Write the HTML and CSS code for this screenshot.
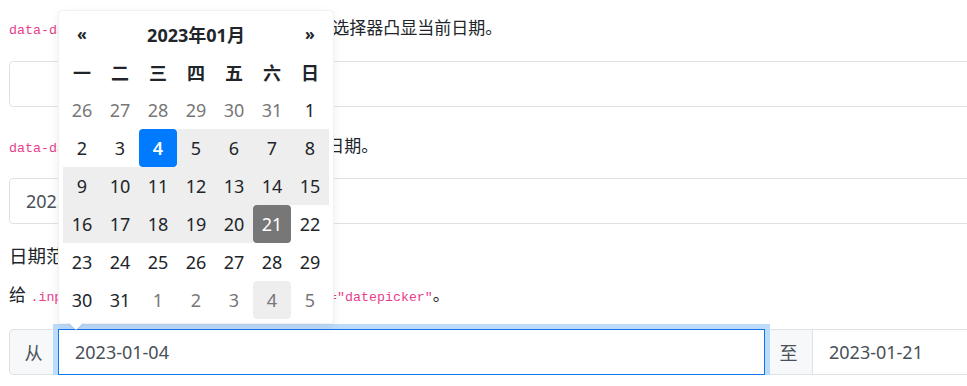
FILE: index.html
```html
<!DOCTYPE html>
<html lang="zh-CN">
<head>
  <meta charset="UTF-8">
  <meta name="viewport" content="width=device-width, initial-scale=1.0">
  <title>日期选择器</title>
  <link rel="stylesheet" href="styles.css">
</head>
<body>
  <div class="page">
    <p class="line"><code>data-date-today-highlight="true"</code>可让日期选择器凸显当前日期。</p>
    <input class="field gap-a" type="text">

    <p class="line gap-b"><code>data-date-multidate="true"</code>&nbsp;&nbsp;可以选择多个日期。</p>
    <input class="field gap-c" type="text" value="2023-01-04,2023-01-21">

    <h5 class="section-title">日期范围</h5>
    <p class="line gap-d">给 <code>.input-daterange</code> 容器添加&thinsp;<code>data-provide="datepicker"</code>。</p>

    <div class="daterange">
      <span class="addon addon-first">从</span>
      <input class="field is-focus" type="text" value="2023-01-04">
      <span class="addon addon-mid">至</span>
      <input class="field field-last" type="text" value="2023-01-21">
    </div>
  </div>

  <div class="datepicker">
    <div class="dp-grid">
      <span class="dp-nav">&laquo;</span>
      <span class="dp-switch">2023年01月</span>
      <span class="dp-nav">&raquo;</span>

      <span class="dow">一</span><span class="dow">二</span><span class="dow">三</span><span class="dow">四</span><span class="dow">五</span><span class="dow">六</span><span class="dow">日</span>

      <span class="day old">26</span><span class="day old">27</span><span class="day old">28</span><span class="day old">29</span><span class="day old">30</span><span class="day old">31</span><span class="day">1</span>

      <span class="day">2</span><span class="day">3</span><span class="day active">4</span><span class="day in-range">5</span><span class="day in-range">6</span><span class="day in-range">7</span><span class="day in-range">8</span>

      <span class="day in-range">9</span><span class="day in-range">10</span><span class="day in-range">11</span><span class="day in-range">12</span><span class="day in-range">13</span><span class="day in-range">14</span><span class="day in-range">15</span>

      <span class="day in-range">16</span><span class="day in-range">17</span><span class="day in-range">18</span><span class="day in-range">19</span><span class="day in-range">20</span><span class="day range-end">21</span><span class="day">22</span>

      <span class="day">23</span><span class="day">24</span><span class="day">25</span><span class="day">26</span><span class="day">27</span><span class="day">28</span><span class="day">29</span>

      <span class="day">30</span><span class="day">31</span><span class="day new">1</span><span class="day new">2</span><span class="day new">3</span><span class="day new hover">4</span><span class="day new">5</span>
    </div>
  </div>
</body>
</html>
```

FILE: styles.css
```css
body {
  margin: 0;
  overflow: hidden;
  font-family: "Noto Sans", "Noto Sans CJK SC", sans-serif;
  font-size: 17px;
  color: #212529;
  background: #fff;
}
.page {
  width: 1500px;
  padding: 16px 0 0 9px;
}
.line {
  margin: 0;
  line-height: 24px;
}
code {
  font-family: "Liberation Mono", monospace;
  font-size: 13.3px;
  line-height: 1;
  color: #e83e8c;
}
.field {
  display: block;
  width: 100%;
  height: 46px;
  box-sizing: border-box;
  border: 1px solid #dee2e6;
  border-radius: 4px;
  padding: 0 16px;
  font-family: "Noto Sans", "Noto Sans CJK SC", sans-serif;
  font-size: 18px;
  color: #495057;
  background: #fff;
  outline: none;
}
.gap-a {
  margin-top: 21px;
}
.gap-b {
  margin-top: 27px;
}
.gap-c {
  margin-top: 20px;
}
.gap-d {
  margin-top: 14px;
}
.section-title {
  margin: 18px 0 0;
  font-size: 18.5px;
  font-weight: 400;
  line-height: 27px;
}
.daterange {
  display: flex;
  margin-top: 22px;
  height: 46px;
}
.addon {
  flex: 0 0 auto;
  box-sizing: border-box;
  display: flex;
  align-items: center;
  justify-content: center;
  background: #f7f8fa;
  border: 1px solid #dee2e6;
  font-size: 18px;
  color: #495057;
}
.addon-first {
  width: 49px;
  border-radius: 4px 0 0 4px;
}
.addon-mid {
  width: 48px;
  border-left: none;
}
.daterange .field {
  height: 46px;
  border-radius: 0;
}
.is-focus {
  flex: 0 0 707px;
  width: 707px;
  position: relative;
  z-index: 1;
  border-color: #1274ec;
  box-shadow: 0 0 0 5px #bddbfa;
}
.field-last {
  flex: 1;
  border-left: none;
}

/* datepicker dropdown */
.datepicker {
  position: absolute;
  left: 58px;
  top: 10px;
  z-index: 5;
  width: 266px;
  padding: 4px;
  background: #fff;
  border: 1px solid #f1f1f1;
  border-radius: 4px;
  box-shadow: 0 3px 10px rgba(0,0,0,0.07);
}
.datepicker:before {
  content: "";
  position: absolute;
  left: 9px;
  bottom: -8px;
  border-top: 8px solid rgba(0,0,0,0.08);
  border-left: 8px solid transparent;
  border-right: 8px solid transparent;
}
.datepicker:after {
  content: "";
  position: absolute;
  left: 10px;
  bottom: -7px;
  border-top: 7px solid #fff;
  border-left: 7px solid transparent;
  border-right: 7px solid transparent;
}
.dp-grid {
  display: grid;
  grid-template-columns: repeat(7, 38px);
  grid-auto-rows: 38px;
}
.dp-grid span {
  display: flex;
  align-items: center;
  justify-content: center;
  font-size: 18px;
}
.dp-nav {
  font-weight: 700;
  font-size: 16px !important;
}
.dp-switch {
  grid-column: span 5;
  font-weight: 700;
}
.dow {
  font-weight: 700;
}
.day {
  color: #212529;
  border-radius: 4px;
}
.old,
.new {
  color: #777;
}
.active {
  background: #007bff;
  color: #fff;
  font-weight: 600;
}
.in-range {
  background: #eee;
  border-radius: 0;
}
.range-end {
  background: #777;
  color: #fff;
}
.hover {
  background: #eee;
}
```
